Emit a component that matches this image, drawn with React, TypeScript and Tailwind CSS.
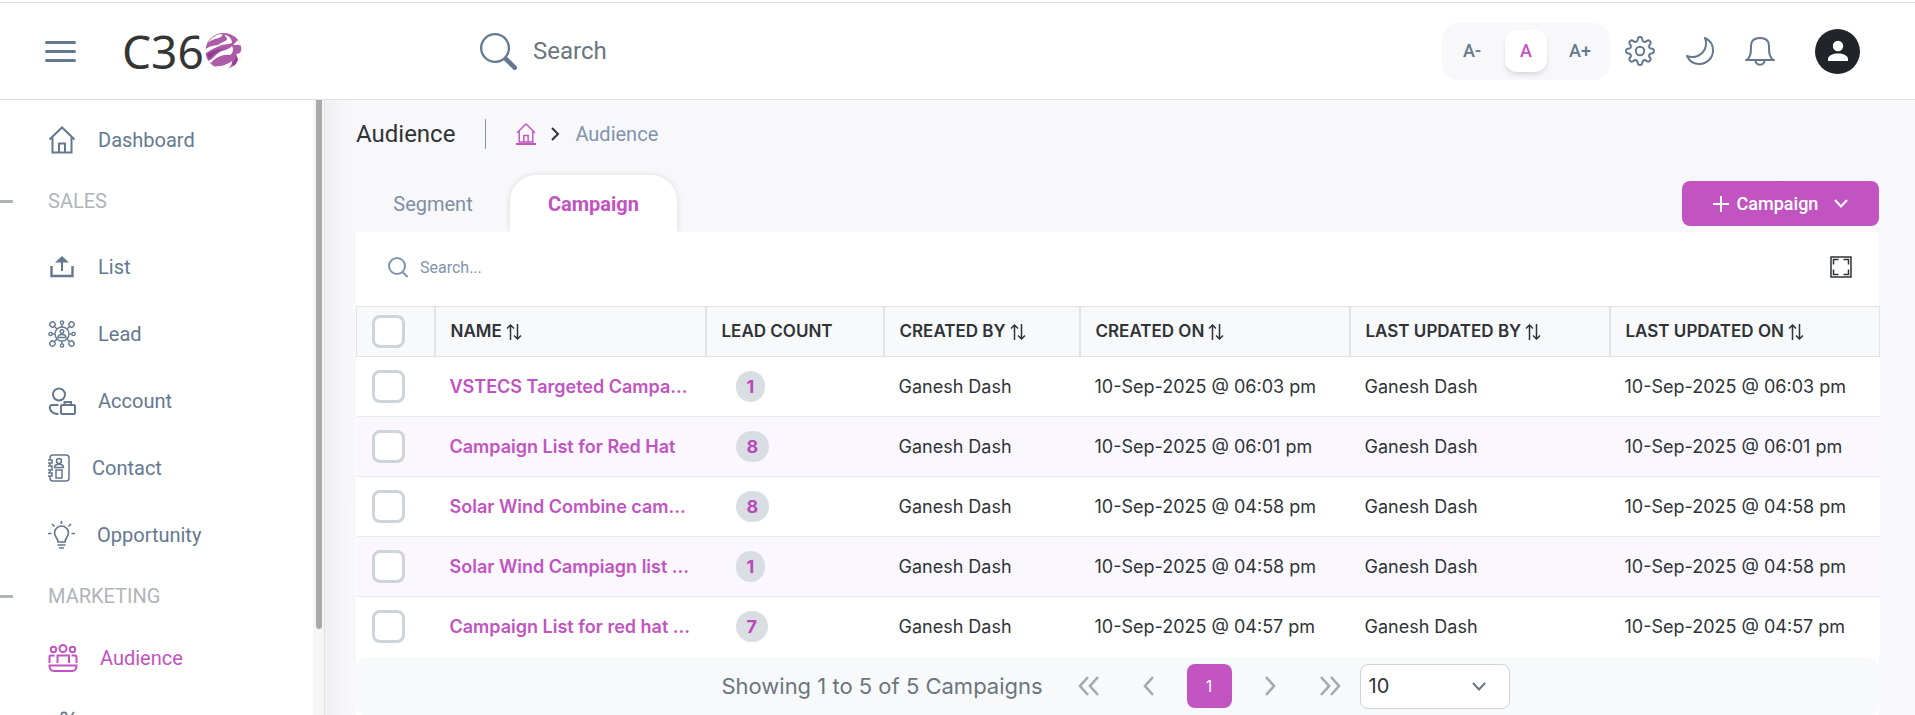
import type { ReactNode, SVGProps } from "react";
import { BsSearch } from "react-icons/bs";
import { IoMoonOutline } from "react-icons/io5";

const Svg = ({ children, ...p }: SVGProps<SVGSVGElement>) => (
  <svg fill="none" stroke="currentColor" strokeWidth={2} aria-hidden="true" {...p}>
    {children}
  </svg>
);

const gearPath = (() => {
  const pts: string[] = [];
  for (let i = 0; i <= 144; i++) {
    const a = (i / 144) * Math.PI * 2;
    const w = Math.cos(a * 8);
    const r = 12 + 2 * Math.tanh(w * 1.9);
    pts.push(`${(16 + r * Math.sin(a)).toFixed(2)} ${(16 - r * Math.cos(a)).toFixed(2)}`);
  }
  return `M${pts.join("L")}Z`;
})();

const Gear = () => (
  <Svg viewBox="0 0 32 32" className="size-8">
    <path d={gearPath} strokeLinejoin="round" />
    <circle cx="16" cy="16" r="4.2" />
  </Svg>
);

const Bell = () => (
  <Svg viewBox="0 0 32 32" className="size-8" strokeLinejoin="round" strokeLinecap="round">
    <path d="M2 25H30M3 25C6 22 7 20 7 11C7 5 11 3 16 3S25 5 25 11C25 20 26 22 29 25" />
    <path d="M11.500 25.500C12 31 20 31 20.500 25.500" />
  </Svg>
);

const House = ({ className }: { className: string }) => (
  <Svg viewBox="0 0 27 28" className={className}>
    <path d="M1 13.500L13.500 1.500L26 13.500M4 11.500V26.500H23V11.500M10.500 26V17.500H16.500V26" />
  </Svg>
);

const Upload = () => (
  <Svg viewBox="0 0 27 27" className="h-[27px] w-7">
    <path d="M3 13V23H24V13" strokeWidth={2.4} />
    <path d="M13.500 18V8" />
    <path d="M6.500 9.500L13.500 3L20.500 9.500Z" fill="currentColor" stroke="none" />
  </Svg>
);

const spokes = [0, 45, 90, 135, 180, 225, 270, 315];
const Network = () => (
  <Svg viewBox="0 0 28 28" className="size-7" strokeWidth={1.4}>
    <circle cx="14" cy="14" r="7" />
    <circle cx="14" cy="11.500" r="1.800" />
    <path d="M10 17.500C10 13.500 18 13.500 18 17.500Z" />
    {spokes.map((a) => (
      <g key={a} transform={`rotate(${a} 14 14)`}>
        <path d={a % 90 ? "M14 7V3.500" : "M14 7V4"} />
        <circle cx="14" cy={a % 90 ? 0.5 : 2.5} r={a % 90 ? 2.6 : 1.6} />
      </g>
    ))}
  </Svg>
);

const Account = () => (
  <Svg viewBox="0 0 28 28" className="size-7">
    <circle cx="11" cy="7.500" r="6" />
    <path d="M10.500 18H4C0 18 1 27 10.500 27" />
    <rect x="13" y="18" width="14" height="9" rx="1" />
    <path d="M16.500 18V15H23V18" />
  </Svg>
);

const Contact = () => (
  <Svg viewBox="0 0 22 28" className="h-7 w-[22px]" strokeWidth={1.5}>
    <path d="M2 6V4Q2 1 5 1H18Q21 1 21 4V24Q21 27 18 27H5Q2 27 2 24V22M2 9V12M2 16V19M0 6H4V9H0M0 12H4V16H0M0 19H4V22H0" />
    <circle cx="11" cy="7" r="2.500" />
    <path d="M6.500 13.500C6.500 9 15.500 9 15.500 13.500Z" />
    <rect x="8" y="16" width="6" height="8" />
  </Svg>
);

const Bulb = () => (
  <Svg viewBox="0 0 27 28" className="h-7 w-[27px]" strokeWidth={1.7}>
    <path d="M10 21C10 17 6.500 16 6.500 12A7 7 0 0 1 20.500 12C20.500 16 17 17 17 21Z" />
    <path d="M9.500 24H17.500M11 27H16M13.500 0V3M0 12.500H3.500M23.500 12.500H27M4 3L6.500 5.500M23 3L20.500 5.500" />
  </Svg>
);

const Audience = () => (
  <Svg viewBox="0 0 30 28" className="h-7 w-[30px]">
    <circle cx="15" cy="4.500" r="3.500" />
    <circle cx="5.500" cy="5.500" r="2.700" />
    <circle cx="24.500" cy="5.500" r="2.700" />
    <path d="M9.500 19V11.500H21V19M1.500 19V13Q1.500 11.500 3 11.500H6.500M28.500 19V13Q28.500 11.500 27 11.500H23.500M1.500 21.500H28.500Q28.500 27 24 27H6Q1.500 27 1.500 21.500Z" />
  </Svg>
);

const Megaphone = () => (
  <Svg viewBox="0 0 30 28" className="h-7 w-[30px]" strokeWidth={1.7}>
    <circle cx="16" cy="4" r="2.600" />
    <path d="M26 1L19 11M4 16L20 8V24L4 20Z" />
  </Svg>
);

const Logo = () => (
  <a href="#" aria-label="C360" className="flex items-center gap-px text-[#353535]">
    <span className="font-['Noto_Sans'] text-[46px] leading-[48px]">C36</span>
    <svg viewBox="0 0 37 38" className="h-[38px] w-[37px]" aria-hidden="true">
      <circle cx="18.500" cy="19" r="18" fill="#ad5ba6" />
      <path d="M1 17C5 12 12 10 18 10C23 10 27 7 29 4L34 9C32 12 28 15 22 16C14 17 8 21 3 28Z" fill="#ad5ba6" />
      <path d="M3 11C8 6 14 7 17 4C19 2 15 2 13 2.500C9 4 5 7 3 11Z" fill="#fff" />
      <path d="M19 3C23 3 27 6 27 11C23 13 17 12 11 14C17 10 22 9 22 7C22 5 20 4 19 3Z" fill="#fff" />
      <path d="M0 18C6 12 13 14 19 12C12 15 6 17 0 22Z" fill="#fff" />
      <path d="M3 29C9 27 11 21 17 19C21 18 24 17 27 14C29 18 28 21 25 23C18 22 11 25 6 31Z" fill="#fff" />
      <path d="M9 34C15 35 22 33 27 29C27 33 25 36 21 38L14 37Z" fill="#fff" />
      <path d="M28 13L33 8L36 14C34 12 31 13 28 13Z" fill="#fff" />
      <path d="M31 22C34 22 36 20 37 17C37 24 35 28 31 32C33 28 33 25 31 22Z" fill="#fff" />
      <path d="M2 22C8 18 13 17 19 17C12 19 8 23 4 28Z" fill="#933b94" />
      <path d="M8 30C13 26 20 25 25 23C25 28 20 29 16 31Z" fill="#ad5ba6" />
      <path d="M27 31C30 29 31 26 31 23L33 28L29 34Z" fill="#933b94" />
    </svg>
  </a>
);

const Sort = () => (
  <Svg viewBox="0 0 16 18" className="h-[18px] w-4" strokeWidth={1.5}>
    <path d="M4.500 17V2M1 5.500L4.500 2L8 5.500M11.500 1V16M8 12.500L11.500 16L15 12.500" />
  </Svg>
);

const Chevrons = ({ d, label, w }: { d: string; label: string; w: string }) => (
  <button aria-label={label} className="flex h-11 w-[60px] items-center justify-center text-[#a3a9af]">
    <Svg viewBox={w} className="h-5" strokeWidth={2.6}>
      <path d={d} />
    </Svg>
  </button>
);

type Item = { label: string; icon: ReactNode; active?: boolean };

const NavItem = ({ label, icon, active }: Item) => (
  <li>
    <a
      href="#"
      className={`flex h-[67px] items-center gap-[22px] pl-12 text-xl ${active ? "text-[#c154c1]" : "text-[#64788f]"}`}
    >
      {icon}
      {label}
    </a>
  </li>
);

const NavHeading = ({ label }: { label: string }) => (
  <li className="flex h-14 items-center gap-[35px] text-xl text-[#afb4ba]">
    <span className="h-[3px] w-[13px] bg-[#afb4ba]" />
    {label}
  </li>
);

const columns = [
  { label: "NAME", sort: true, w: "w-[271px]" },
  { label: "LEAD COUNT", sort: false, w: "w-[178px]" },
  { label: "CREATED BY", sort: true, w: "w-[196px]" },
  { label: "CREATED ON", sort: true, w: "w-[270px]" },
  { label: "LAST UPDATED BY", sort: true, w: "w-[260px]" },
  { label: "LAST UPDATED ON", sort: true, w: "w-[270px]" },
];

const rows = [
  { name: "VSTECS Targeted Campa...", count: 1, on: "10-Sep-2025 @ 06:03 pm" },
  { name: "Campaign List for Red Hat", count: 8, on: "10-Sep-2025 @ 06:01 pm" },
  { name: "Solar Wind Combine cam...", count: 8, on: "10-Sep-2025 @ 04:58 pm" },
  { name: "Solar Wind Campiagn list ...", count: 1, on: "10-Sep-2025 @ 04:58 pm" },
  { name: "Campaign List for red hat ...", count: 7, on: "10-Sep-2025 @ 04:57 pm" },
];

const Check = ({ label }: { label: string }) => (
  <input
    type="checkbox"
    aria-label={label}
    className="block size-[33px] appearance-none rounded-lg border-3 border-[#ced4da] bg-white checked:bg-[#c154c1]"
  />
);

function Header() {
  return (
    <header className="mt-0.5 flex h-[98px] shrink-0 items-center border-y border-[#dee0e2] bg-white pr-[55px] pl-[45px] text-[#64788f]">
      <button aria-label="Toggle menu" className="mr-[46px] flex flex-col gap-1.5">
        <span className="h-[3px] w-[31px] rounded-sm bg-current" />
        <span className="h-[3px] w-[31px] rounded-sm bg-current" />
        <span className="h-[3px] w-[31px] rounded-sm bg-current" />
      </button>
      <div className="w-[358px]">
        <Logo />
      </div>
      <label className="flex flex-1 items-center gap-4">
        <BsSearch className="size-[37px]" aria-hidden="true" />
        <input
          type="text"
          aria-label="Search"
          placeholder="Search"
          className="w-80 text-2xl outline-none placeholder:text-[#6c757d]"
        />
      </label>
      <div className="flex h-[57px] items-center gap-3 rounded-2xl bg-[#f8f8fb] px-[9px] text-lg font-medium">
        <button className="size-[42px]">A-</button>
        <button className="size-[42px] rounded-xl bg-white text-[#c154c1] shadow-md">A</button>
        <button className="size-[42px]">A+</button>
      </div>
      <div className="ml-3.5 flex items-center gap-7">
        <button aria-label="Settings">
          <Gear />
        </button>
        <button aria-label="Dark mode">
          <IoMoonOutline className="size-8 -scale-x-100 -rotate-0" style={{ transform: "none" }} />
        </button>
        <button aria-label="Notifications">
          <Bell />
        </button>
      </div>
      <button aria-label="Profile" className="ml-[39px] flex size-[45px] items-center justify-center rounded-full bg-[#212529] text-white">
        <svg viewBox="0 0 22 22" className="size-[22px]" fill="currentColor" aria-hidden="true">
          <circle cx="11" cy="6" r="5.200" />
          <path d="M1 21V19C1 11.500 21 11.500 21 19V21Z" />
        </svg>
      </button>
    </header>
  );
}

function Sidebar() {
  return (
    <aside className="flex w-[325px] shrink-0 border-r border-[#e2e2e4] bg-white">
      <nav className="min-w-0 flex-1 overflow-hidden pt-1.5">
        <ul>
          <NavItem label="Dashboard" icon={<House className="h-7 w-7" />} />
          <NavHeading label="SALES" />
          <li className="h-1" />
          <NavItem label="List" icon={<Upload />} />
          <NavItem label="Lead" icon={<Network />} />
          <NavItem label="Account" icon={<Account />} />
          <NavItem label="Contact" icon={<Contact />} />
          <NavItem label="Opportunity" icon={<Bulb />} />
          <NavHeading label="MARKETING" />
          <NavItem label="Audience" icon={<Audience />} active />
          <NavItem label="Campaign" icon={<Megaphone />} />
        </ul>
      </nav>
      <div className="w-[11px] bg-[#f5f5f6] px-[3px]">
        <div className="h-[86%] w-1.5 rounded-b-full bg-[#a9a9a9]" />
      </div>
    </aside>
  );
}

function CampaignTable() {
  return (
    <table className="w-full table-fixed border-collapse text-[#2f3337]">
      <thead>
        <tr className="h-[50px] bg-[#f8f9fb] text-left text-[17px]">
          <th className="w-[78px] border border-r-2 border-[#e1e3e5] pl-[15px]">
            <Check label="Select all" />
          </th>
          {columns.map((c) => (
            <th key={c.label} className={`${c.w} border border-r-2 border-[#e1e3e5] pl-[15px] font-semibold last:border-r`}>
              <span className="flex items-center gap-1">
                {c.label}
                {c.sort && <Sort />}
              </span>
            </th>
          ))}
        </tr>
      </thead>
      <tbody>
        {rows.map((r, i) => (
          <tr key={i} className="h-[60px] border-b border-[#e9eaec] bg-white text-lg last:border-0 even:bg-[#faf7fe]">
            <td className="pl-[15px]">
              <Check label={`Select ${r.name}`} />
            </td>
            <td className="pl-[15px] text-lg font-semibold whitespace-nowrap text-[#c154c1]">
              <a href="#">{r.name}</a>
            </td>
            <td className="pl-[30px]">
              <span className="inline-flex h-[31px] items-center rounded-full bg-[#d9dee2] px-[11px] font-bold text-[#b948b9]">{r.count}</span>
            </td>
            <td className="pl-[15px]">Ganesh Dash</td>
            <td className="pl-[15px] whitespace-nowrap">{r.on}</td>
            <td className="pl-[15px]">Ganesh Dash</td>
            <td className="pl-[15px] whitespace-nowrap">{r.on}</td>
          </tr>
        ))}
      </tbody>
    </table>
  );
}

function Pagination() {
  return (
    <footer className="flex h-[59px] items-center justify-center rounded-xl bg-[#f8f9fb] pr-1">
      <span className="mr-4 text-[22px] text-[#6c757d]">Showing 1 to 5 of 5 Campaigns</span>
      <Chevrons label="First page" w="0 0 22 20" d="M10 1L2 10L10 19M20 1L12 10L20 19" />
      <Chevrons label="Previous page" w="0 0 12 20" d="M10 1L2 10L10 19" />
      <button className="mx-2 h-11 w-[45px] rounded-lg bg-[#c154c1] text-base text-white">1</button>
      <Chevrons label="Next page" w="0 0 12 20" d="M2 1L10 10L2 19" />
      <Chevrons label="Last page" w="0 0 22 20" d="M2 1L10 10L2 19M12 1L20 10L12 19" />
      <div className="grid items-center">
        <select
          aria-label="Rows per page"
          defaultValue="10"
          className="col-start-1 row-start-1 h-[45px] w-[150px] appearance-none rounded-lg border border-[#ced4da] bg-white pl-2 text-xl text-[#2f3337]"
        >
          <option>10</option>
          <option>25</option>
          <option>50</option>
        </select>
        <Svg viewBox="0 0 14 9" className="pointer-events-none col-start-1 row-start-1 mr-6 h-[9px] w-3.5 justify-self-end text-[#6c757d]">
          <path d="M1 1L7 7.500L13 1" />
        </Svg>
      </div>
    </footer>
  );
}

export default function App() {
  return (
    <div className="flex h-screen flex-col overflow-hidden bg-white font-[Roboto,sans-serif]">
      <Header />
      <div className="flex min-h-0 flex-1">
        <Sidebar />
        <main className="min-w-0 flex-1 bg-[#f8f8fb] bg-linear-to-r from-[#efeff2] to-[#f8f8fb] to-[24px] pr-9 pl-[31px]">
          <div className="flex h-[75px] items-center pb-2 text-xl">
            <h1 className="text-2xl text-[#2f3337]">Audience</h1>
            <span className="mr-[30px] ml-[30px] h-[30px] w-px bg-[#8094ae]" />
            <a href="#" aria-label="Home" className="border-b-2 border-[#c154c1] text-[#c154c1]">
              <House className="h-5 w-5" />
            </a>
            <Svg viewBox="0 0 9 14" className="mx-[15px] h-3.5 w-[9px] text-[#2f3337]">
              <path d="M1 1L7 7L1 13" />
            </Svg>
            <span className="text-[#8094ae]">Audience</span>
          </div>
          <div className="flex h-[57px] items-center justify-between">
            <div role="tablist" className="flex h-full text-xl">
              <button role="tab" aria-selected="false" className="w-[154px] text-[#7d8fa6]">
                Segment
              </button>
              <button
                role="tab"
                aria-selected="true"
                className="w-[167px] rounded-t-[26px] bg-white font-bold text-[#c154c1] shadow-[0_0_6px_rgba(0,0,0,0.12)]"
              >
                Campaign
              </button>
            </div>
            <button className="flex h-[45px] w-[197px] items-center justify-center rounded-lg bg-[#c154c1] text-lg font-medium text-white">
              <Svg viewBox="0 0 16 16" className="mr-2 size-4">
                <path d="M8 0V16M0 8H16" />
              </Svg>
              Campaign
              <Svg viewBox="0 0 14 9" className="ml-4 h-[9px] w-3.5">
                <path d="M1 1L7 7.500L13 1" />
              </Svg>
            </button>
          </div>
          <section className="relative bg-white font-[Inter,sans-serif]">
            <div className="flex h-[74px] items-center justify-between pr-[27px] pb-1 pl-8">
              <label className="flex items-center gap-3 text-[#8094ae]">
                <Svg viewBox="0 0 20 21" className="h-[21px] w-5">
                  <circle cx="9" cy="9" r="8" />
                  <path d="M14.500 15L19.500 20" />
                </Svg>
                <input
                  type="text"
                  aria-label="Search campaigns"
                  placeholder="Search..."
                  className="w-60 pt-0.5 font-[Roboto,sans-serif] text-base outline-none placeholder:text-[#8094ae]"
                />
              </label>
              <button aria-label="Full screen" className="text-[#2f3337]">
                <Svg viewBox="0 0 22 22" className="size-[22px]" strokeWidth={1.5}>
                  <path d="M1 1H21V21H1ZM3.500 8.500V3.500H8.500M13.500 3.500H18.500V8.500M18.500 13.500V18.500H13.500M8.500 18.500H3.500V13.500" />
                </Svg>
              </button>
            </div>
            <CampaignTable />
            <Pagination />
          </section>
        </main>
      </div>
    </div>
  );
}
